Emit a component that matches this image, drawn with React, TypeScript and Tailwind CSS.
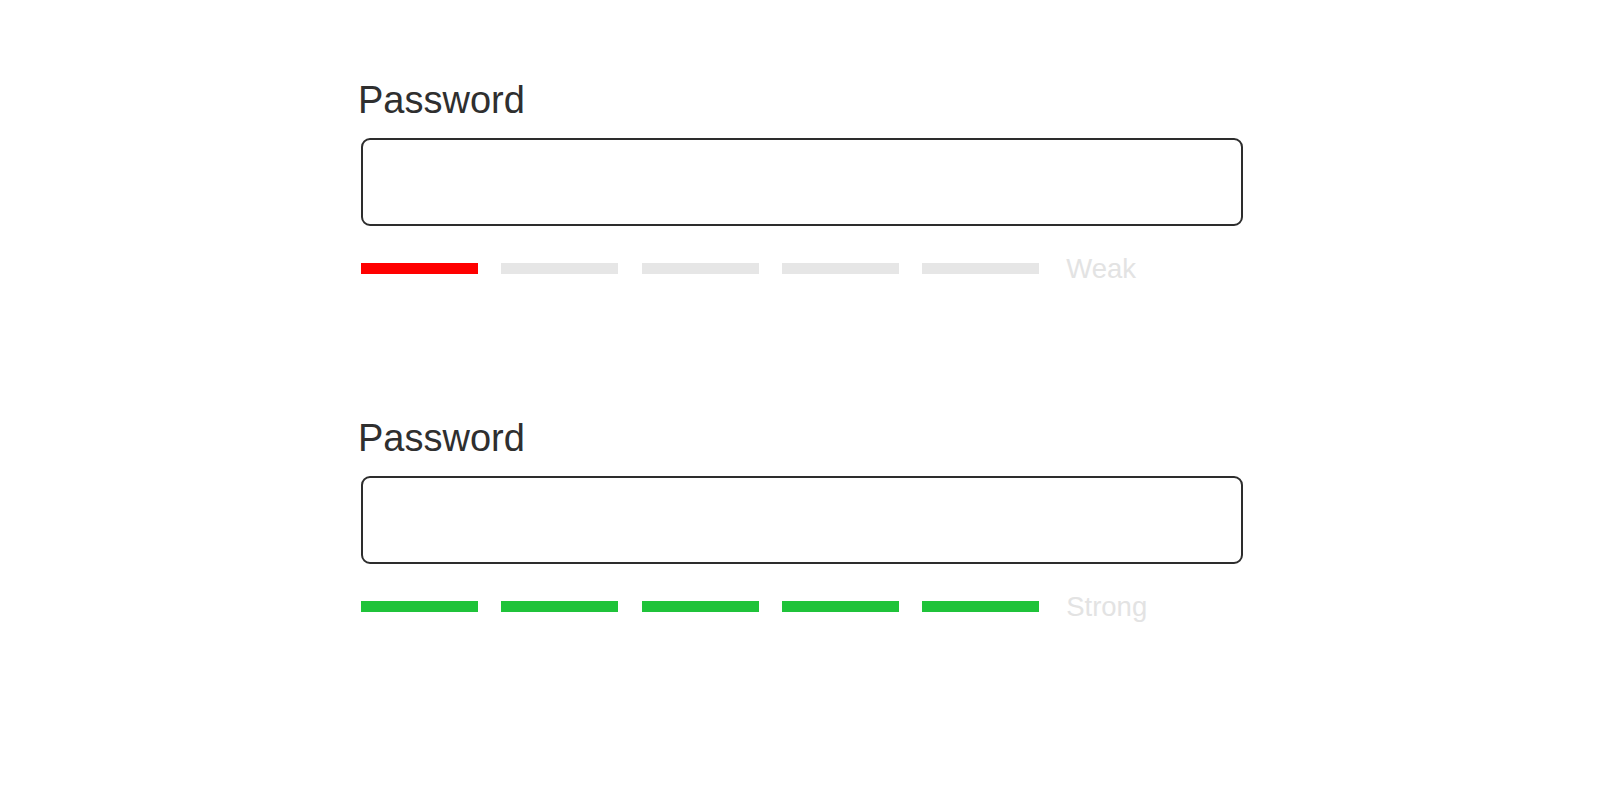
const SEGMENTS = 5;

type Strength = {
  label: string;
  filled: number;
  color: string;
};

function StrengthField({ strength }: { strength: Strength }) {
  return (
    <div className="flex flex-col">
      <label className="-ml-[3px] text-[38px] leading-[38px] text-[#2f2f2f]">Password</label>
      <input
        type="password"
        className="mt-[19px] h-[88px] w-[882px] rounded-[9px] border-2 border-[#2d2d2d] bg-white px-4 outline-none"
      />
      <div className="mt-[28.5px] flex items-center">
        <div className="flex gap-[23.3px]">
          {Array.from({ length: SEGMENTS }).map((_, i) => (
            <div
              key={i}
              className={`h-[11px] w-[117px] ${i < strength.filled ? strength.color : "bg-[#e6e6e6]"}`}
            />
          ))}
        </div>
        <span className="ml-[27px] text-[27.5px] leading-[28px] text-[#e3e3e3]">{strength.label}</span>
      </div>
    </div>
  );
}

export default function App() {
  return (
    <div
      className="flex h-[800px] w-full flex-col bg-white pl-[361px] pt-[81px]"
      style={{ fontFamily: '"Liberation Sans", Arial, sans-serif' }}
    >
      <StrengthField strength={{ label: "Weak", filled: 1, color: "bg-[#ff0000]" }} />
      <div className="mt-[136.5px]">
        <StrengthField strength={{ label: "Strong", filled: 5, color: "bg-[#1fc33a]" }} />
      </div>
    </div>
  );
}
